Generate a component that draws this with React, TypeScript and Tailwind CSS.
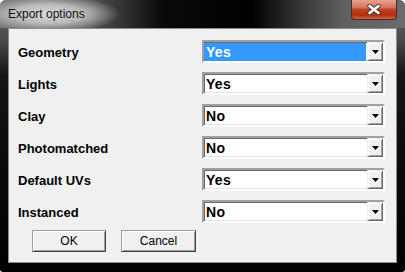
import React from 'react';

type Option = { label: string; value: string; selected?: boolean };

const options: Option[] = [
  { label: 'Geometry', value: 'Yes', selected: true },
  { label: 'Lights', value: 'Yes' },
  { label: 'Clay', value: 'No' },
  { label: 'Photomatched', value: 'No' },
  { label: 'Default UVs', value: 'Yes' },
  { label: 'Instanced', value: 'No' },
];

// Classic combo box with sunken frame and a small drop button
const ComboBox = ({ value, selected }: { value: string; selected?: boolean }) => (
  <div className="w-[183px] h-[23px] flex border-2 border-t-[#a0a0a0] border-l-[#a0a0a0] border-b-white border-r-white bg-white shadow-[inset_1px_1px_0_#696969,inset_-1px_-1px_0_#e3e3e3]">
    <div className="flex-1 flex mt-[1px] mr-[1px]">
      <div
        className={
          selected
            ? 'flex-1 h-[18px] bg-[#3399ff] text-white pl-[2px] text-[14px] font-bold tracking-[0.3px] leading-[18px]'
            : 'flex-1 h-[18px] text-black pl-[2px] text-[14px] font-bold tracking-[0.3px] leading-[18px]'
        }
      >
        {value}
      </div>
    </div>
    <div className="w-[16px] h-[19px] flex items-center justify-center bg-[#f0f0f0] border border-t-[#f0f0f0] border-l-[#f0f0f0] border-b-[#696969] border-r-[#696969] shadow-[inset_1px_1px_0_#ffffff,inset_-1px_-1px_0_#a0a0a0]">
      <svg width="7" height="4" viewBox="0 0 7 4">
        <path d="M0 0h7L3.5 4z" fill="#000" />
      </svg>
    </div>
  </div>
);

const PushButton = ({ children, width }: { children: React.ReactNode; width: string }) => (
  <button
    className={`${width} h-[22px] bg-[#f0f0f0] text-[12px] text-black leading-none border border-t-[#a0a0a0] border-l-[#a0a0a0] border-b-[#404040] border-r-[#404040] shadow-[inset_1px_1px_0_#ffffff,inset_-1px_-1px_0_#a0a0a0]`}
  >
    {children}
  </button>
);

export default function App() {
  return (
    <div className="w-[405px] h-[272px] bg-white">
      <div className="w-[405px] h-[272px] flex flex-col rounded-t-[6px] rounded-b-[3px] overflow-hidden bg-[linear-gradient(to_bottom,#6a6a6a_0px,#4a4a4a_40px,#141414_75px,#000_100%)] font-['Liberation_Sans',Arial,sans-serif]">
        {/* Title bar */}
        <div className="h-[28px] flex items-start bg-[radial-gradient(ellipse_72px_19px_at_48px_14px,rgba(220,220,220,1)_0%,rgba(195,195,195,0.9)_50%,rgba(150,150,150,0)_100%),linear-gradient(to_right,#6e6e6e_0%,#555_22%,#0a0a0a_40%,#000_62%,#3a3a3a_75%,#606060_85%,#6a6a6a_100%)]">
          <span className="pl-[8px] pt-[7px] text-[12px] leading-[14px] text-[#101010]">Export options</span>
          <div className="ml-auto mr-[8px] w-[46px] h-[20px] flex items-center justify-center rounded-b-[4px] border border-t-0 border-[#3a3030] bg-[linear-gradient(to_bottom,#e7a08e_0%,#d4745c_40%,#c2401f_50%,#b22e10_80%,#d8643c_100%)]">
            <svg width="14" height="11" viewBox="0 0 14 11">
              <path d="M2.5 2l9 7M11.5 2l-9 7" stroke="#3a3a3a" strokeWidth="4.4" strokeLinecap="round" />
              <path d="M2.5 2l9 7M11.5 2l-9 7" stroke="#ffffff" strokeWidth="2.6" strokeLinecap="round" />
            </svg>
          </div>
        </div>

        {/* Client area */}
        <div className="mx-[8px] h-[235px] bg-[#f0f0f0] border border-[#8c8c8c] pt-[11px] pl-[9px] text-black">
          <div className="flex flex-col gap-[9px]">
            {options.map((o) => (
              <div key={o.label} className="flex items-start h-[23px]">
                <span className="w-[184px] text-[13px] font-bold leading-[26px]">{o.label}</span>
                <ComboBox value={o.value} selected={o.selected} />
              </div>
            ))}
          </div>
          <div className="flex gap-[15px] mt-[7px] pl-[14px]">
            <PushButton width="w-[74px]">OK</PushButton>
            <PushButton width="w-[75px]">Cancel</PushButton>
          </div>
        </div>
      </div>
    </div>
  );
}
